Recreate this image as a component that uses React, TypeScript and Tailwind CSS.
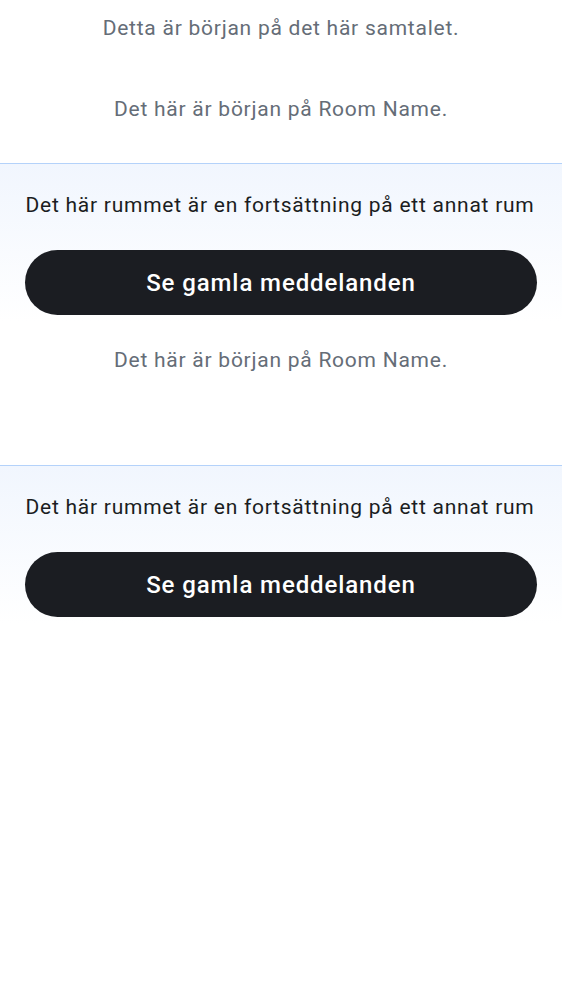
import React from "react";

const font = { fontFamily: "Roboto, 'Noto Sans', sans-serif" };

function Section() {
  return (
    <div className="border-t border-[#b4d2fa] bg-gradient-to-b from-[#f1f6fe] to-white px-[25px] pt-[27px] pb-[7px]">
      <p className="-ml-[2px] whitespace-nowrap text-center text-[21px] leading-[28px] tracking-[0.75px] text-[#1b1d22]">
        Det här rummet är en fortsättning på ett annat rum
      </p>
      <button className="mt-[31px] flex h-[65px] w-full items-center justify-center rounded-full bg-[#1b1d22] text-[24px] font-medium tracking-[0.9px] text-white">
        Se gamla meddelanden
      </button>
    </div>
  );
}

export default function App() {
  return (
    <div className="min-h-screen w-[562px] bg-white" style={font}>
      <p className="pt-[14px] text-center text-[21px] leading-[28px] tracking-[0.75px] text-[#656d77]">
        Detta är början på det här samtalet.
      </p>
      <p className="mt-[53px] text-center text-[21px] leading-[28px] tracking-[0.75px] text-[#656d77]">
        Det här är början på Room Name.
      </p>
      <div className="mt-[40px]">
        <Section />
      </div>
      <p className="mt-[24px] text-center text-[21px] leading-[28px] tracking-[0.75px] text-[#656d77]">
        Det här är början på Room Name.
      </p>
      <div className="mt-[91px]">
        <Section />
      </div>
    </div>
  );
}
